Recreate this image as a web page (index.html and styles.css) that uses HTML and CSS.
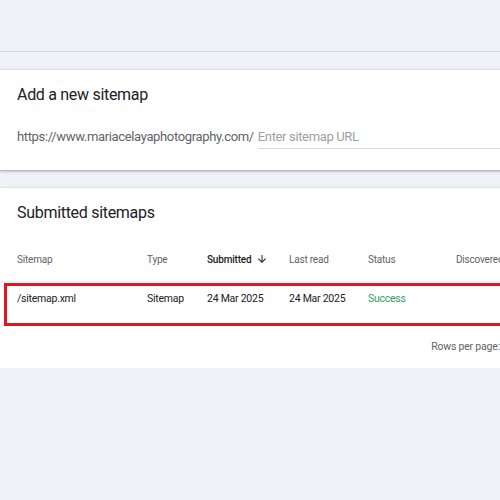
FILE: index.html
```html
<!DOCTYPE html>
<html>
<head>
<meta charset="utf-8">
<link rel="stylesheet" href="styles.css">
</head>
<body>
<div class="page">
  <div class="topbar"></div>
  <section class="card add-card">
    <h2 class="card-title">Add a new sitemap</h2>
    <div class="url-row">
      <span class="url-prefix">https://www.mariacelayaphotography.com/</span>
      <span class="url-input">Enter sitemap URL</span>
    </div>
  </section>
  <section class="card list-card">
    <h2 class="card-title">Submitted sitemaps</h2>
    <div class="table">
      <div class="trow thead">
        <span class="c1">Sitemap</span>
        <span class="c2">Type</span>
        <span class="c3 sorted">Submitted <svg class="arrow" viewBox="0 0 24 24" width="12" height="12"><path d="M20 12l-1.41-1.41L13 16.17V4h-2v12.17l-5.58-5.59L4 12l8 8 8-8z" fill="#202124"/></svg></span>
        <span class="c4">Last read</span>
        <span class="c5">Status</span>
        <span class="c6">Discovered pages</span>
      </div>
      <div class="trow tbody highlighted">
        <span class="c1">/sitemap.xml</span>
        <span class="c2">Sitemap</span>
        <span class="c3">24 Mar 2025</span>
        <span class="c4">24 Mar 2025</span>
        <span class="c5 ok">Success</span>
        <span class="c6"></span>
      </div>
    </div>
    <div class="tfoot">Rows per page:</div>
  </section>
</div>
</body>
</html>
```
FILE: styles.css
```css
html, body {
  margin: 0;
  padding: 0;
  background: #eff2f7;
  overflow: hidden;
  font-family: Roboto, "Liberation Sans", Arial, sans-serif;
}
.page {
  width: 640px;
}
.topbar {
  height: 51px;
  border-bottom: 1px solid #d3d6db;
  margin-bottom: 18px;
}
.card {
  background: #fff;
  box-shadow: 0 1px 2px rgba(60,64,67,.3), 0 1px 3px 1px rgba(60,64,67,.15);
}
.card-title {
  margin: 0;
  padding: 13px 0 0 17px;
  font-size: 16px;
  letter-spacing: -0.3px;
  line-height: 24px;
  font-weight: 400;
  color: #202124;
}
.add-card {
  height: 100px;
  margin-bottom: 18px;
}
.url-row {
  display: flex;
  align-items: flex-end;
  padding: 20px 0 0 17px;
  font-size: 13px;
  letter-spacing: -0.35px;
  line-height: 20px;
}
.url-prefix {
  color: #5f6368;
  padding-bottom: 2px;
  margin-right: 4px;
}
.url-input {
  flex: 1;
  color: #9aa0a6;
  border-bottom: 1px solid #dadce0;
  padding-bottom: 1px;
}
.list-card {
  height: 180px;
}
.table {
  margin-top: 12px;
}
.trow {
  display: flex;
  padding-left: 17px;
}
.thead {
  height: 44px;
  align-items: center;
  font-size: 10px;
  letter-spacing: -0.2px;
  color: #5f6368;
}
.tbody {
  border-top: 1px solid #e8eaed;
  border-bottom: 1px solid #e8eaed;
  padding-top: 9px;
  box-sizing: border-box;
  height: 45px;
  font-size: 10.5px;
  letter-spacing: -0.25px;
  line-height: 16px;
  color: #202124;
  position: relative;
}
.highlighted::after {
  content: "";
  position: absolute;
  left: 4px;
  top: 1px;
  right: 0;
  bottom: -1px;
  border: 3px solid #e3141e;
}
.c1 { width: 130px; }
.c2 { width: 60px; }
.c3 { width: 82px; }
.c4 { width: 79px; }
.c5 { width: 88px; }
.c6 { width: 140px; white-space: nowrap; }
.sorted {
  color: #202124;
  font-weight: 500;
  display: flex;
  align-items: center;
  gap: 5px;
}
.arrow { display: block; }
.ok { color: #34a060; }
.tfoot {
  width: 500px;
  box-sizing: border-box;
  text-align: right;
  padding-top: 13px;
  font-size: 10.5px;
  letter-spacing: -0.2px;
  line-height: 16px;
  color: #5f6368;
  white-space: nowrap;
  overflow: hidden;
  margin-right: -4px;
}
```
